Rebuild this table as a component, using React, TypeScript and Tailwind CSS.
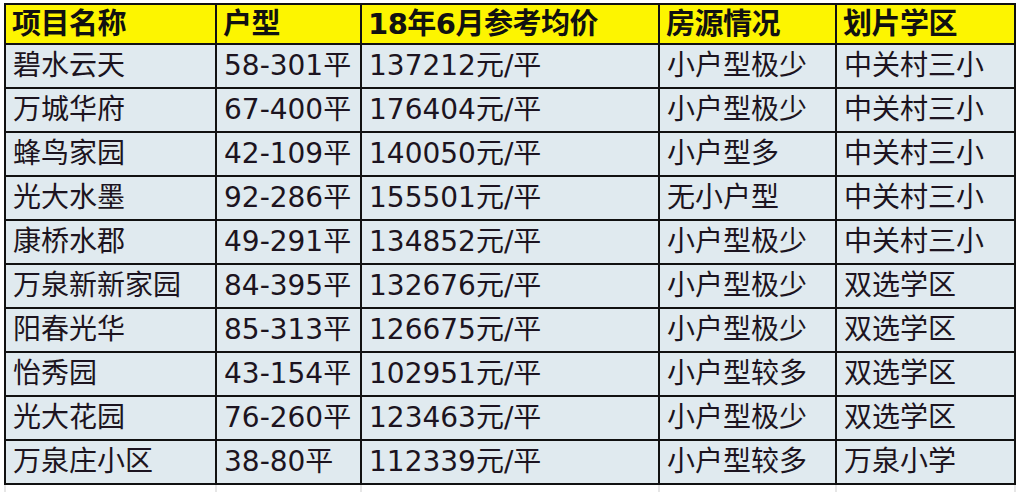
import React from "react";

const rows = [
  ["碧水云天", "58-301平", "137212元/平", "小户型极少", "中关村三小"],
  ["万城华府", "67-400平", "176404元/平", "小户型极少", "中关村三小"],
  ["蜂鸟家园", "42-109平", "140050元/平", "小户型多", "中关村三小"],
  ["光大水墨", "92-286平", "155501元/平", "无小户型", "中关村三小"],
  ["康桥水郡", "49-291平", "134852元/平", "小户型极少", "中关村三小"],
  ["万泉新新家园", "84-395平", "132676元/平", "小户型极少", "双选学区"],
  ["阳春光华", "85-313平", "126675元/平", "小户型极少", "双选学区"],
  ["怡秀园", "43-154平", "102951元/平", "小户型较多", "双选学区"],
  ["光大花园", "76-260平", "123463元/平", "小户型极少", "双选学区"],
  ["万泉庄小区", "38-80平", "112339元/平", "小户型较多", "万泉小学"],
];

const header = ["项目名称", "户型", "18年6月参考均价", "房源情况", "划片学区"];

export default function App() {
  return (
    <div
      className="w-[1020px] h-[492px] bg-white overflow-hidden pt-[3px] pl-[4px]"
      style={{ fontFamily: '"DejaVu Sans", "Noto Sans CJK SC", sans-serif' }}
    >
      <div className="w-[1012px] grid grid-cols-[209px_143px_296px_175px_177px] auto-rows-[42px] grid-rows-[38px] gap-[2px] p-[2px] bg-[#111]">
        {header.map((h) => (
          <div
            key={h}
            className="bg-[#fdf500] flex items-center pl-[6px] text-[29px] font-bold text-[#111] leading-none tracking-[-0.5px]"
          >
            {h}
          </div>
        ))}
        {rows.map((r, i) =>
          r.map((c, j) => (
            <div
              key={i + "-" + j}
              className="bg-[#e0eaef] flex items-center pl-[7px] text-[28px] text-[#1c1420] leading-none"
            >
              {c}
            </div>
          ))
        )}
      </div>
      <div className="w-[1012px] h-[10px] grid grid-cols-[209px_143px_296px_175px_177px] gap-[2px] px-[2px] bg-[#e6e6e6]">
        {header.map((h) => (
          <div key={h} className="bg-white" />
        ))}
      </div>
    </div>
  );
}
